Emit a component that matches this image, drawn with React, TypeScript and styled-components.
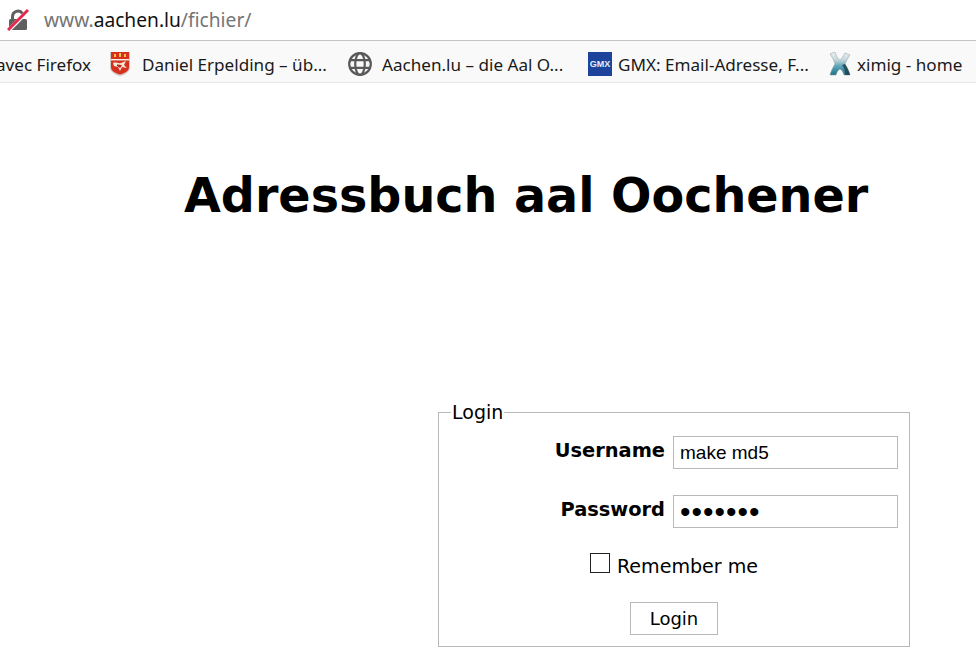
import styled, { createGlobalStyle } from "styled-components";

const GlobalStyle = createGlobalStyle`
  html, body {
    margin: 0;
    padding: 0;
    background: #fff;
    overflow: hidden;
  }
`;

const Page = styled.div`
  width: 976px;
  height: 660px;
  overflow: hidden;
  display: flex;
  flex-direction: column;
`;

const AddressBar = styled.div`
  height: 40px;
  flex: none;
  box-sizing: content-box;
  display: flex;
  align-items: center;
  gap: 15px;
  padding-left: 7px;
  border-bottom: 1px solid #c4c4c4;
  font-family: "Noto Sans", sans-serif;
  font-size: 19.2px;
  color: #757575;
`;

const AddressText = styled.span`
  margin-top: -2px;
`;

const Domain = styled.span`
  color: #111;
`;

const BookmarkBar = styled.div`
  height: 42px;
  flex: none;
  box-sizing: border-box;
  display: flex;
  align-items: center;
  padding-top: 5px;
  background: #f9f9f9;
  border-bottom: 1px solid #e4e4e4;
  white-space: nowrap;
  font-family: "Noto Sans", sans-serif;
  font-size: 17.1px;
  color: #1a1a1a;
  margin-left: -4px;
`;

const Bookmark = styled.div<{ $width: number; $gap?: number }>`
  width: ${(p) => p.$width}px;
  flex: none;
  display: flex;
  align-items: center;
  gap: ${(p) => p.$gap ?? 10}px;
`;

const Title = styled.h1`
  margin: 0;
  padding: 84px 0 0 184px;
  font-family: "DejaVu Sans", sans-serif;
  font-size: 47.6px;
  line-height: 58px;
  font-weight: bold;
  color: #000;
`;

const LoginSet = styled.fieldset`
  box-sizing: border-box;
  width: 472px;
  height: 247px;
  margin: 175px 0 0 438px;
  padding: 0;
  border: 1px solid #b9b9b9;
  font-family: "DejaVu Sans", sans-serif;
  color: #000;
`;

const LoginLegend = styled.legend`
  margin-left: 12px;
  padding: 1px 1px 0;
  font-size: 19px;
  line-height: 23px;
`;

const Form = styled.form`
  display: flex;
  flex-direction: column;
  padding-top: 12px;
`;

const Row = styled.div`
  display: flex;
  justify-content: flex-end;
  align-items: flex-start;
  gap: 8px;
  padding-right: 11px;
  margin-bottom: 26px;
`;

const Label = styled.label`
  font-size: 19.4px;
  font-weight: bold;
  line-height: 28px;
  margin-top: 1px;
`;

const TextInput = styled.input<{ $masked?: boolean }>`
  box-sizing: border-box;
  width: 225px;
  height: 33px;
  padding: 0 6px;
  border: 1px solid #b9b9b9;
  background: #fff;
  outline: none;
  font-family: "Liberation Sans", sans-serif;
  font-size: ${(p) => (p.$masked ? 30 : 19)}px;
  letter-spacing: ${(p) => (p.$masked ? 1 : 0)}px;
  color: #000;
`;

const RememberRow = styled.div`
  display: flex;
  align-items: center;
  justify-content: center;
  gap: 7px;
  margin-top: -3px;
  font-size: 19.1px;
`;

const RememberLabel = styled.label`
  position: relative;
  top: 4px;
`;

const Tick = styled.input`
  appearance: none;
  box-sizing: border-box;
  width: 20px;
  height: 20px;
  margin: 0;
  border: 1px solid #222;
  background: #fff;
`;

const ButtonRow = styled.div`
  display: flex;
  justify-content: center;
  margin-top: 28px;
`;

const LoginButton = styled.button`
  box-sizing: border-box;
  width: 88px;
  height: 33px;
  padding: 0;
  border: 1px solid #b9b9b9;
  background: #fff;
  font-family: "DejaVu Sans", sans-serif;
  font-size: 18px;
  color: #000;
`;

const LockIcon = () => (
  <svg width="22" height="22" viewBox="0 0 22 22">
    <path d="M5.500 11V7.500a5.500 5.500 0 0 1 10-3" fill="none" stroke="#5f5f5f" strokeWidth="3" />
    <rect x="2" y="10" width="18" height="11" rx="1.500" fill="#5f5f5f" />
    <path d="M2 21 21 2" stroke="#fff" strokeWidth="4" />
    <path d="M1 21 21 1" stroke="#e8274f" strokeWidth="3" />
  </svg>
);

const CrestIcon = () => (
  <svg width="20" height="24" viewBox="0 0 20 24">
    <path d="M0 0h20v15c0 5-5 8-10 9C5 23 0 20 0 15Z" fill="#cfc9c2" />
    <path d="M1 0h18v7H1Z" fill="#d8301f" />
    <path d="M4 2h2v3H4Zm5-1h2v4H9Zm5 1h2v3h-2Z" fill="#f2c64a" />
    <path d="M1 7h18v1.500H1Z" fill="#f3eee2" />
    <path d="M1 8.500h18V15c0 4-4 6-9 7.500C5 21 1 19 1 15Z" fill="#d8301f" />
    <path d="M3 11c3-1.500 5 1 8 0l5-2-2 4 3 3-5-1-2 4-2-4-4-1Z" fill="#f3e9d2" />
    <path d="M7 12.500c2 0 3 .2 5 1l-2 2.500-3-2Z" fill="#c4241a" />
  </svg>
);

const GlobeIcon = () => (
  <svg width="24" height="24" viewBox="0 0 24 24" fill="none" stroke="#595959" strokeWidth="2.200">
    <circle cx="12" cy="12" r="10.800" />
    <ellipse cx="12" cy="12" rx="4.800" ry="10.800" />
    <path d="M2 8.200h20M2 15.800h20" />
  </svg>
);

const GmxIcon = () => (
  <svg width="24" height="24" viewBox="0 0 24 24">
    <rect width="24" height="24" fill="#1c449b" />
    <text
      x="12"
      y="15.300"
      textAnchor="middle"
      fontFamily="'Liberation Sans', sans-serif"
      fontWeight="bold"
      fontSize="9"
      fill="#e6ecf8"
    >
      GMX
    </text>
  </svg>
);

const XimigIcon = () => (
  <svg width="22" height="24" viewBox="0 0 22 24">
    <defs>
      <linearGradient id="ximFill" x1="0" y1="0" x2="0" y2="1">
        <stop offset="0" stopColor="#eef2f3" />
        <stop offset="0.35" stopColor="#c3d6da" />
        <stop offset="0.6" stopColor="#5fa8ba" />
        <stop offset="1" stopColor="#1f7188" />
      </linearGradient>
    </defs>
    <path
      d="M1 2 6 0C7 4 9 7 11 8 13 7 14 4 16 1L21 3C19 6 17 9 16 12 18 15 20 19 21 23H15C14 20 13 18 11 17 9 18 8 20 7 23H1C2 19 4 15 6 12 5 8 3 5 1 2Z"
      fill="url(#ximFill)"
      stroke="#8b9699"
      strokeWidth="0.500"
    />
    <path d="M16 12C18 15 20 19 21 23H16.500C16 19 15 15 13 13Z" fill="#1d3f49" opacity="0.8" />
  </svg>
);

export default function App() {
  return (
    <Page>
      <GlobalStyle />
      <AddressBar>
        <LockIcon />
        <AddressText>
          www.<Domain>aachen.lu</Domain>/fichier/
        </AddressText>
      </AddressBar>
      <BookmarkBar>
        <Bookmark $width={114}>avec Firefox</Bookmark>
        <Bookmark $width={238} $gap={12}>
          <CrestIcon />
          <span>Daniel Erpelding – üb...</span>
        </Bookmark>
        <Bookmark $width={240}>
          <GlobeIcon />
          <span>Aachen.lu – die Aal O...</span>
        </Bookmark>
        <Bookmark $width={241} $gap={6}>
          <GmxIcon />
          <span>GMX: Email-Adresse, F...</span>
        </Bookmark>
        <Bookmark $width={148} $gap={6}>
          <XimigIcon />
          <span>ximig - home</span>
        </Bookmark>
      </BookmarkBar>
      <Title>Adressbuch aal Oochener</Title>
      <LoginSet>
        <LoginLegend>Login</LoginLegend>
        <Form>
          <Row>
            <Label htmlFor="user">Username</Label>
            <TextInput id="user" type="text" defaultValue="make md5" />
          </Row>
          <Row>
            <Label htmlFor="pass">Password</Label>
            <TextInput id="pass" type="password" defaultValue="1234567" $masked />
          </Row>
          <RememberRow>
            <Tick type="checkbox" id="remember" />
            <RememberLabel htmlFor="remember">Remember me</RememberLabel>
          </RememberRow>
          <ButtonRow>
            <LoginButton type="button">Login</LoginButton>
          </ButtonRow>
        </Form>
      </LoginSet>
    </Page>
  );
}
